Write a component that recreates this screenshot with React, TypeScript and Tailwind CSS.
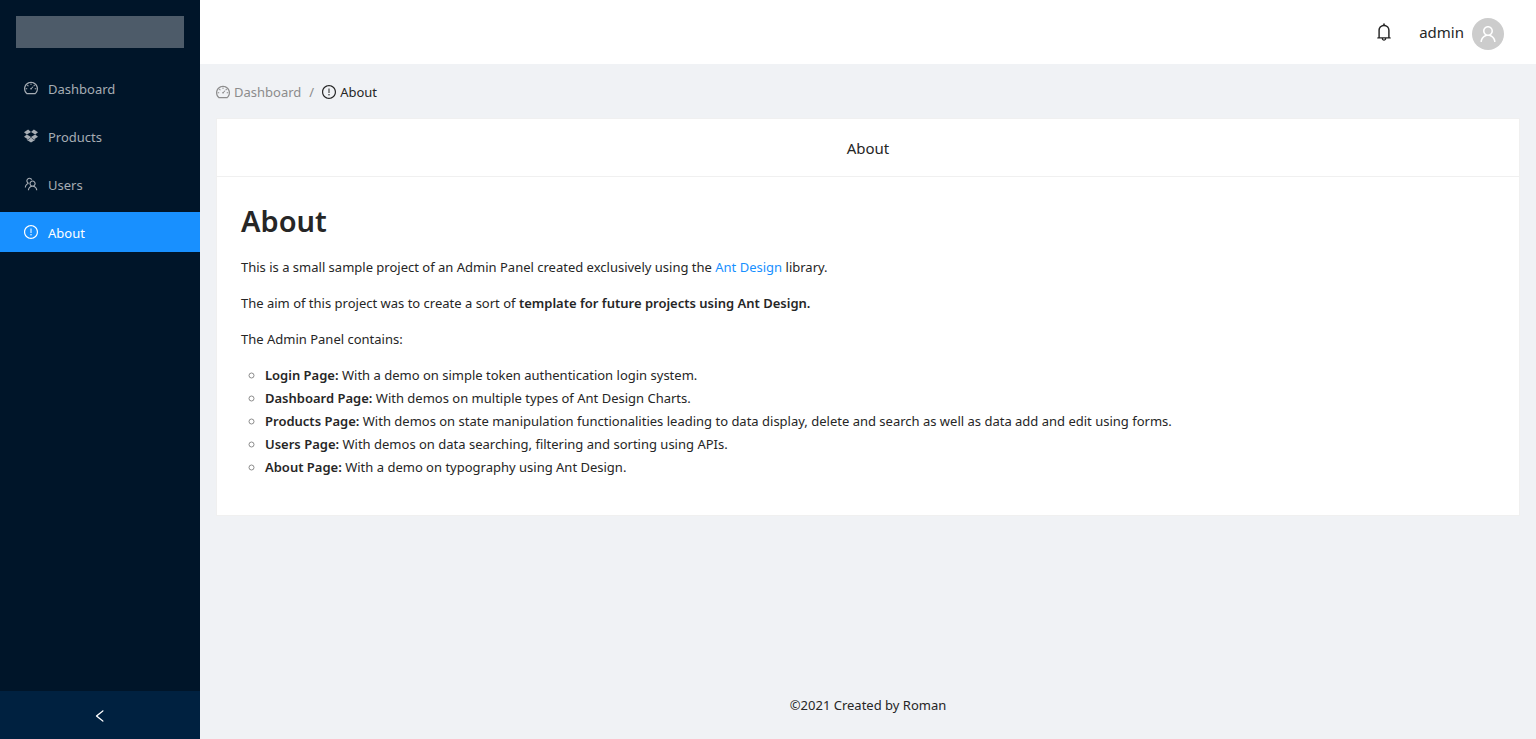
import type { IconType } from "react-icons";
import {
  AiOutlineBell,
  AiOutlineDashboard,
  AiOutlineDropbox,
  AiOutlineExclamationCircle,
  AiOutlineLeft,
  AiOutlineTeam,
  AiOutlineUser,
} from "react-icons/ai";

// Ant Design crops its glyphs to the inner 896 units of the 1024 grid.
const GLYPH_BOX = "64 64 896 896";

const menu: { label: string; icon: IconType; active?: boolean }[] = [
  { label: "Dashboard", icon: AiOutlineDashboard },
  { label: "Products", icon: AiOutlineDropbox },
  { label: "Users", icon: AiOutlineTeam },
  { label: "About", icon: AiOutlineExclamationCircle, active: true },
];

const features = [
  ["Login Page:", "With a demo on simple token authentication login system."],
  ["Dashboard Page:", "With demos on multiple types of Ant Design Charts."],
  [
    "Products Page:",
    "With demos on state manipulation functionalities leading to data display, delete and search as well as data add and edit using forms.",
  ],
  ["Users Page:", "With demos on data searching, filtering and sorting using APIs."],
  ["About Page:", "With a demo on typography using Ant Design."],
];

function Sidebar() {
  return (
    <aside className="flex w-[200px] shrink-0 flex-col bg-[#001529]">
      <div className="m-4 h-8 bg-[#4d5b69]" />
      <nav className="mt-1 flex grow flex-col gap-2">
        {menu.map(({ label, icon: Icon, active }) => (
          <a
            key={label}
            href="#"
            className={
              active
                ? "flex h-10 items-center gap-[10px] bg-[#1890ff] pl-6 text-white"
                : "flex h-10 items-center gap-[10px] pl-6 text-[#a6adb4]"
            }
          >
            <Icon size={14} viewBox={GLYPH_BOX} />
            <span className="pt-0.5">{label}</span>
          </a>
        ))}
      </nav>
      <button
        type="button"
        aria-label="Collapse sidebar"
        className="flex h-12 items-center justify-center bg-[#002140] pt-0.5 text-white"
      >
        <AiOutlineLeft size={14} viewBox={GLYPH_BOX} />
      </button>
    </aside>
  );
}

function Header() {
  return (
    <header className="flex h-16 items-center justify-end bg-white pr-8">
      <button type="button" aria-label="Notifications" className="mr-[26px]">
        <AiOutlineBell size={18} viewBox={GLYPH_BOX} />
      </button>
      <span className="mr-2 text-[15px]">admin</span>
      <span className="mt-1 flex size-8 items-center justify-center rounded-full bg-[#ccc] text-white">
        <AiOutlineUser size={18} viewBox={GLYPH_BOX} />
      </span>
    </header>
  );
}

export default function App() {
  return (
    <div className="flex min-h-screen bg-[#f0f2f5] font-['Noto_Sans',sans-serif] text-[13px] leading-[22px] text-[#262626]">
      <Sidebar />
      <div className="flex min-w-0 grow flex-col">
        <Header />
        <main className="grow px-4">
          <nav aria-label="Breadcrumb" className="flex items-center pt-[17px] pb-[15px] text-[#8c8c8c]">
            <a href="#" className="flex items-center gap-1">
              <AiOutlineDashboard size={14} viewBox={GLYPH_BOX} />
              Dashboard
            </a>
            <span className="mx-2">/</span>
            <span className="flex items-center gap-1 text-[#262626]">
              <AiOutlineExclamationCircle size={14} viewBox={GLYPH_BOX} />
              About
            </span>
          </nav>
          <section className="border border-[#f0f0f0] bg-white">
            <div className="border-b border-[#f0f0f0] pt-[17px] pb-[15px] text-center text-[15px] leading-[25px]">
              About
            </div>
            <div className="px-6 pt-6 pb-[23px]">
              <h1 className="mb-[15px] text-[29px] leading-10 font-semibold">About</h1>
              <p className="mb-[14px]">
                This is a small sample project of an Admin Panel created exclusively using the{" "}
                <a href="#" className="text-[#1890ff]">
                  Ant Design
                </a>{" "}
                library.
              </p>
              <p className="mb-[14px]">
                The aim of this project was to create a sort of{" "}
                <strong className="font-semibold">
                  template for future projects using Ant Design.
                </strong>
              </p>
              <p className="mb-[14px]">The Admin Panel contains:</p>
              <ul className="mb-[14px] grid list-[circle] gap-px pl-6 marker:text-[#8c8c8c]">
                {features.map(([name, text]) => (
                  <li key={name}>
                    <strong className="font-semibold">{name}</strong> {text}
                  </li>
                ))}
              </ul>
            </div>
          </section>
        </main>
        <footer className="px-6 pt-[25px] pb-[23px] text-center">©2021 Created by Roman</footer>
      </div>
    </div>
  );
}
